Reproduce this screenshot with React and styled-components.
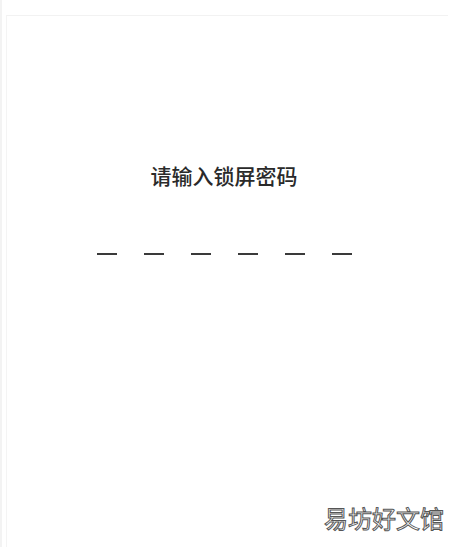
import React from 'react'
import styled, { createGlobalStyle } from 'styled-components'

const GlobalStyle = createGlobalStyle`
    html, body {
        margin: 0;
        padding: 0;
        background: #fff;
    }
    body {
        font-family: "Noto Sans CJK SC", "Noto Sans", sans-serif;
    }
`

function App() {
    const digits = [0, 1, 2, 3, 4, 5]

    return (
        <>
            <GlobalStyle />
            <Screen>
                <Panel>
                    <Title>请输入锁屏密码</Title>
                    <Dots>
                        {digits.map((d) => (
                            <Dash key={d} />
                        ))}
                    </Dots>
                </Panel>
                <Watermark>易坊好文馆</Watermark>
            </Screen>
        </>
    )
}

export default App

const Screen = styled.div`
    position: relative;
    width: 470px;
    height: 547px;
    box-sizing: border-box;
    padding-top: 15px;
    border-left: 2px solid #f3f3f3;
    background: #fff;
    overflow: hidden;
`

const Panel = styled.div`
    display: flex;
    flex-direction: column;
    align-items: center;
    width: 442px;
    height: 100%;
    margin-left: 4px;
    box-sizing: border-box;
    border-top: 1px solid #f2f2f2;
    border-left: 1px solid #f4f4f4;
    padding-top: 144px;
    padding-right: 7px;
`

const Title = styled.div`
    font-size: 21px;
    line-height: 30px;
    font-weight: 500;
    color: #2a2a2a;
`

const Dots = styled.div`
    display: flex;
    gap: 27px;
    margin-top: 63px;
`

const Dash = styled.div`
    width: 20px;
    height: 2px;
    background: #3a3a3a;
`

const Watermark = styled.div`
    position: absolute;
    right: 26px;
    bottom: 14px;
    font-size: 24px;
    line-height: 30px;
    color: #fff;
    -webkit-text-stroke: 1px #555;
    font-family: "Noto Sans CJK SC", sans-serif;
`
